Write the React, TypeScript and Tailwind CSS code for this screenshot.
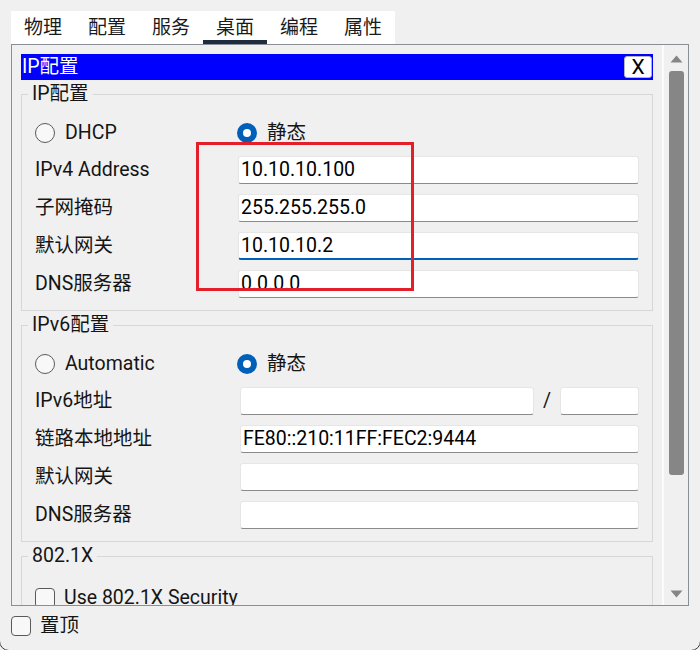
import React from "react";

const tabs = ["物理", "配置", "服务", "桌面", "编程", "属性"];

function Radio({ checked, label }: { checked?: boolean; label: string }) {
	return (
		<div className="flex items-center gap-[10px] h-[22px]">
			{checked ? (
				<span className="w-[20px] h-[20px] rounded-full bg-[#005fb8] flex items-center justify-center">
					<span className="w-[8px] h-[8px] rounded-full bg-white" />
				</span>
			) : (
				<span className="w-[20px] h-[20px] rounded-full border border-[#5a5a5a] bg-[#f8f8f8]" />
			)}
			<span className="leading-none">{label}</span>
		</div>
	);
}

function Field({ value = "", focused, className = "" }: { value?: string; focused?: boolean; className?: string }) {
	return (
		<input
			readOnly
			value={value}
			className={`h-[28px] min-w-0 bg-white border border-[#e6e6e6] rounded-[3px] px-[2px] text-black outline-none ${
				focused ? "border-b-2 border-b-[#005fb8]" : "border-b-[#8a8a8a]"
			} ${className}`}
		/>
	);
}

function Row({ label, children, labelW = "w-[203px]" }: { label: string; children: React.ReactNode; labelW?: string }) {
	return (
		<div className="flex items-center">
			<span className={`${labelW} shrink-0 leading-none`}>{label}</span>
			{children}
		</div>
	);
}

function Group({ title, children, top = "pt-[27px]" }: { title: string; children: React.ReactNode; top?: string }) {
	return (
		<div className={`relative mt-[14px] border border-[#d7d7d7] px-[13px] pb-[12px] ${top}`}>
			<span className="absolute left-[6px] top-[-12px] bg-[#f0f0f0] px-[4px] leading-[22px]">{title}</span>
			{children}
		</div>
	);
}

export default function App() {
	return (
		<div className="relative w-[700px] h-[650px] overflow-hidden bg-[#f0f0f0] text-[19.5px] text-[#151515] font-[family-name:Roboto,'Noto_Sans_CJK_SC',sans-serif]">
			{/* tabs */}
			<div className="pt-[11px] pl-[11px]">
				<div className="flex w-[384px] h-[33px] bg-white">
					{tabs.map((t) => (
						<div key={t} className="relative w-[64px] flex items-center justify-center text-[19px] leading-none text-[#1a1a1a]">
							{t}
							{t === "桌面" && <div className="absolute left-0 right-0 bottom-0 h-[4px] bg-[#1e2c3f]" />}
						</div>
					))}
				</div>
			</div>

			{/* main panel */}
			<div className="ml-[11px] flex w-[678px] h-[562px] border border-[#8a8e96]">
				<div className="flex-1 overflow-hidden px-[9px] pt-[9px]">
					<div className="h-[26px] bg-[#0000ff] flex items-center justify-between pl-px pr-px text-white">
						<span className="leading-none">IP配置</span>
						<button className="w-[28px] h-[22px] rounded-[3px] bg-white border border-[#b5b5b5] flex items-center justify-center text-black text-[21px] leading-none">
							X
						</button>
					</div>

					<Group title="IP配置">
						<div className="flex">
							<div className="w-[202px]">
								<Radio label="DHCP" />
							</div>
							<Radio checked label="静态" />
						</div>
						<div className="mt-[12px] flex flex-col gap-[10px]">
							<Row label="IPv4 Address">
								<Field value="10.10.10.100" className="flex-1" />
							</Row>
							<Row label="子网掩码">
								<Field value="255.255.255.0" className="flex-1" />
							</Row>
							<Row label="默认网关">
								<Field value="10.10.10.2" focused className="flex-1" />
							</Row>
							<Row label="DNS服务器">
								<Field value="0.0.0.0" className="flex-1" />
							</Row>
						</div>
					</Group>

					<Group title="IPv6配置">
						<div className="flex">
							<div className="w-[202px]">
								<Radio label="Automatic" />
							</div>
							<Radio checked label="静态" />
						</div>
						<div className="mt-[12px] flex flex-col gap-[10px]">
							<Row label="IPv6地址" labelW="w-[205px]">
								<Field className="w-[294px]" />
								<span className="w-[26px] text-center leading-none">/</span>
								<Field className="flex-1" />
							</Row>
							<Row label="链路本地地址" labelW="w-[205px]">
								<Field value="FE80::210:11FF:FEC2:9444" className="flex-1" />
							</Row>
							<Row label="默认网关" labelW="w-[205px]">
								<Field className="flex-1" />
							</Row>
							<Row label="DNS服务器" labelW="w-[205px]">
								<Field className="flex-1" />
							</Row>
						</div>
					</Group>

					<Group title="802.1X" top="pt-[30px]">
						<div className="flex items-center gap-[9px] h-[22px]">
							<span className="w-[20px] h-[20px] rounded-[4px] border border-[#5a5a5a] bg-[#f8f8f8]" />
							<span className="leading-none">Use 802.1X Security</span>
						</div>
						<div className="h-[120px]" />
					</Group>
				</div>

				{/* scrollbar */}
				<div className="w-[26px] border-l-2 border-[#fbfbfb] flex flex-col items-center pt-[10px] pb-[7px]">
					<svg width="13" height="8" viewBox="0 0 13 8">
						<path d="M6.5 0.5 L12.5 7.5 L0.5 7.5 Z" fill="#858585" />
					</svg>
					<div className="mt-[8px] w-[15px] h-[404px] rounded-[3px] bg-[#868686]" />
					<div className="flex-1" />
					<svg width="13" height="8" viewBox="0 0 13 8">
						<path d="M0.5 0.5 L12.5 0.5 L6.5 7.5 Z" fill="#858585" />
					</svg>
				</div>
			</div>

			{/* bottom checkbox */}
			<div className="ml-[11px] mt-[10px] flex items-center gap-[9px]">
				<span className="w-[20px] h-[20px] rounded-[4px] border border-[#5a5a5a] bg-[#f8f8f8]" />
				<span className="leading-none">置顶</span>
			</div>

			{/* annotation box */}
			<div className="absolute left-[196px] top-[142px] w-[218px] h-[149px] border-[3px] border-[#e3202a] pointer-events-none" />

			{/* window frame corners */}
			<div className="absolute -left-px -right-px -top-[20px] -bottom-px rounded-[10px] border border-[#3c3c3c] pointer-events-none" />
		</div>
	);
}
